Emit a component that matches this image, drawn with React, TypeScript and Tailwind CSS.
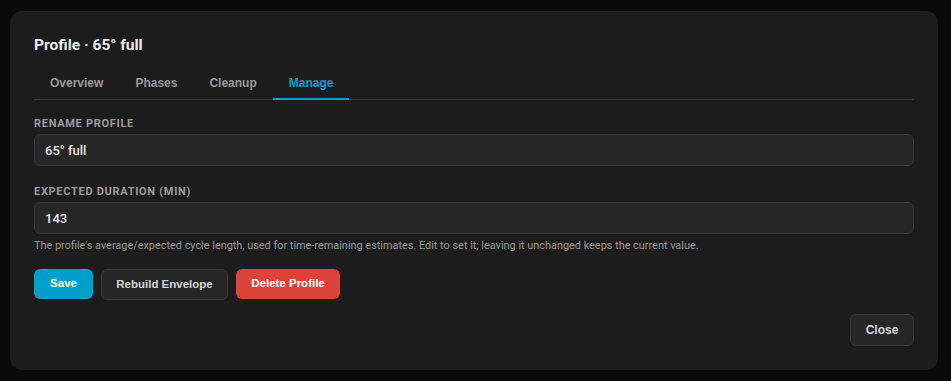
import { useState } from 'react'

const tabs = ['Overview', 'Phases', 'Cleanup', 'Manage']

export default function App() {
  const [active, setActive] = useState('Manage')
  const [name, setName] = useState('65° full')
  const [duration, setDuration] = useState('143')

  return (
    <div className="min-h-screen bg-[#0a0a0a] pt-[11px] pl-[10px] pr-[13px] font-['Roboto',sans-serif]">
      <div className="w-[928px] rounded-xl bg-[#1c1c1c] px-6 pt-6 pb-6">
        <h1 className="text-[15.5px] font-bold leading-[20px] text-[#ececec]">Profile · 65° full</h1>

        {/* Tabs */}
        <div className="mt-[18px] flex border-b border-[#3a3a3a] font-['Liberation_Sans',Arial,sans-serif]">
          {tabs.map((t) => (
            <button
              key={t}
              onClick={() => setActive(t)}
              className={
                t === active
                  ? "-mb-px border-b-2 border-[#0ba0cc] px-4 pt-[1px] pb-[6px] text-[12px] font-bold text-[#0ba0cc]"
                  : "-mb-px border-b-2 border-transparent px-4 pt-[1px] pb-[6px] text-[12px] font-bold text-[#9a9a9a]"
              }
            >
              {t}
            </button>
          ))}
        </div>

        {/* Rename */}
        <label className="mt-[17px] block text-[11px] font-bold uppercase leading-[14px] tracking-[0.7px] text-[#9c9c9c]">
          Rename Profile
        </label>
        <input
          value={name}
          onChange={(e) => setName(e.target.value)}
          className="mt-[3px] block h-[32px] w-full rounded-md border border-[#383838] bg-[#262626] px-[10px] text-[13px] font-medium text-[#e8e8e8] outline-none"
        />

        {/* Duration */}
        <label className="mt-[19px] block text-[11px] font-bold uppercase leading-[14px] tracking-[0.7px] text-[#9c9c9c]">
          Expected Duration (min)
        </label>
        <input
          value={duration}
          onChange={(e) => setDuration(e.target.value)}
          className="mt-[3px] block h-[32px] w-full rounded-md border border-[#383838] bg-[#262626] px-[10px] text-[13px] font-medium text-[#e8e8e8] outline-none"
        />
        <p className="mt-[5px] text-[10.9px] leading-[14px] text-[#9a9a9a]">
          The profile's average/expected cycle length, used for time-remaining estimates. Edit to set it; leaving it unchanged keeps the current value.
        </p>

        {/* Actions */}
        <div className="mt-[16px] flex gap-2 font-['Liberation_Sans',Arial,sans-serif]">
          <button className="h-[30px] w-[59px] rounded-md bg-[#009fcc] text-[11.5px] font-bold text-white">Save</button>
          <button className="h-[31px] w-[127px] rounded-md border border-[#3a3a3a] bg-[#262626] text-[11.5px] font-bold text-[#d6d6d6]">
            Rebuild Envelope
          </button>
          <button className="h-[30px] w-[104px] rounded-md bg-[#dc443a] text-[11.5px] font-bold text-white">Delete Profile</button>
        </div>

        <div className="mt-[14px] flex justify-end font-['Liberation_Sans',Arial,sans-serif]">
          <button className="h-[32px] w-[64px] rounded-md border border-[#3a3a3a] bg-[#262626] text-[12px] font-bold text-[#d8d8d8]">
            Close
          </button>
        </div>
      </div>
    </div>
  )
}
